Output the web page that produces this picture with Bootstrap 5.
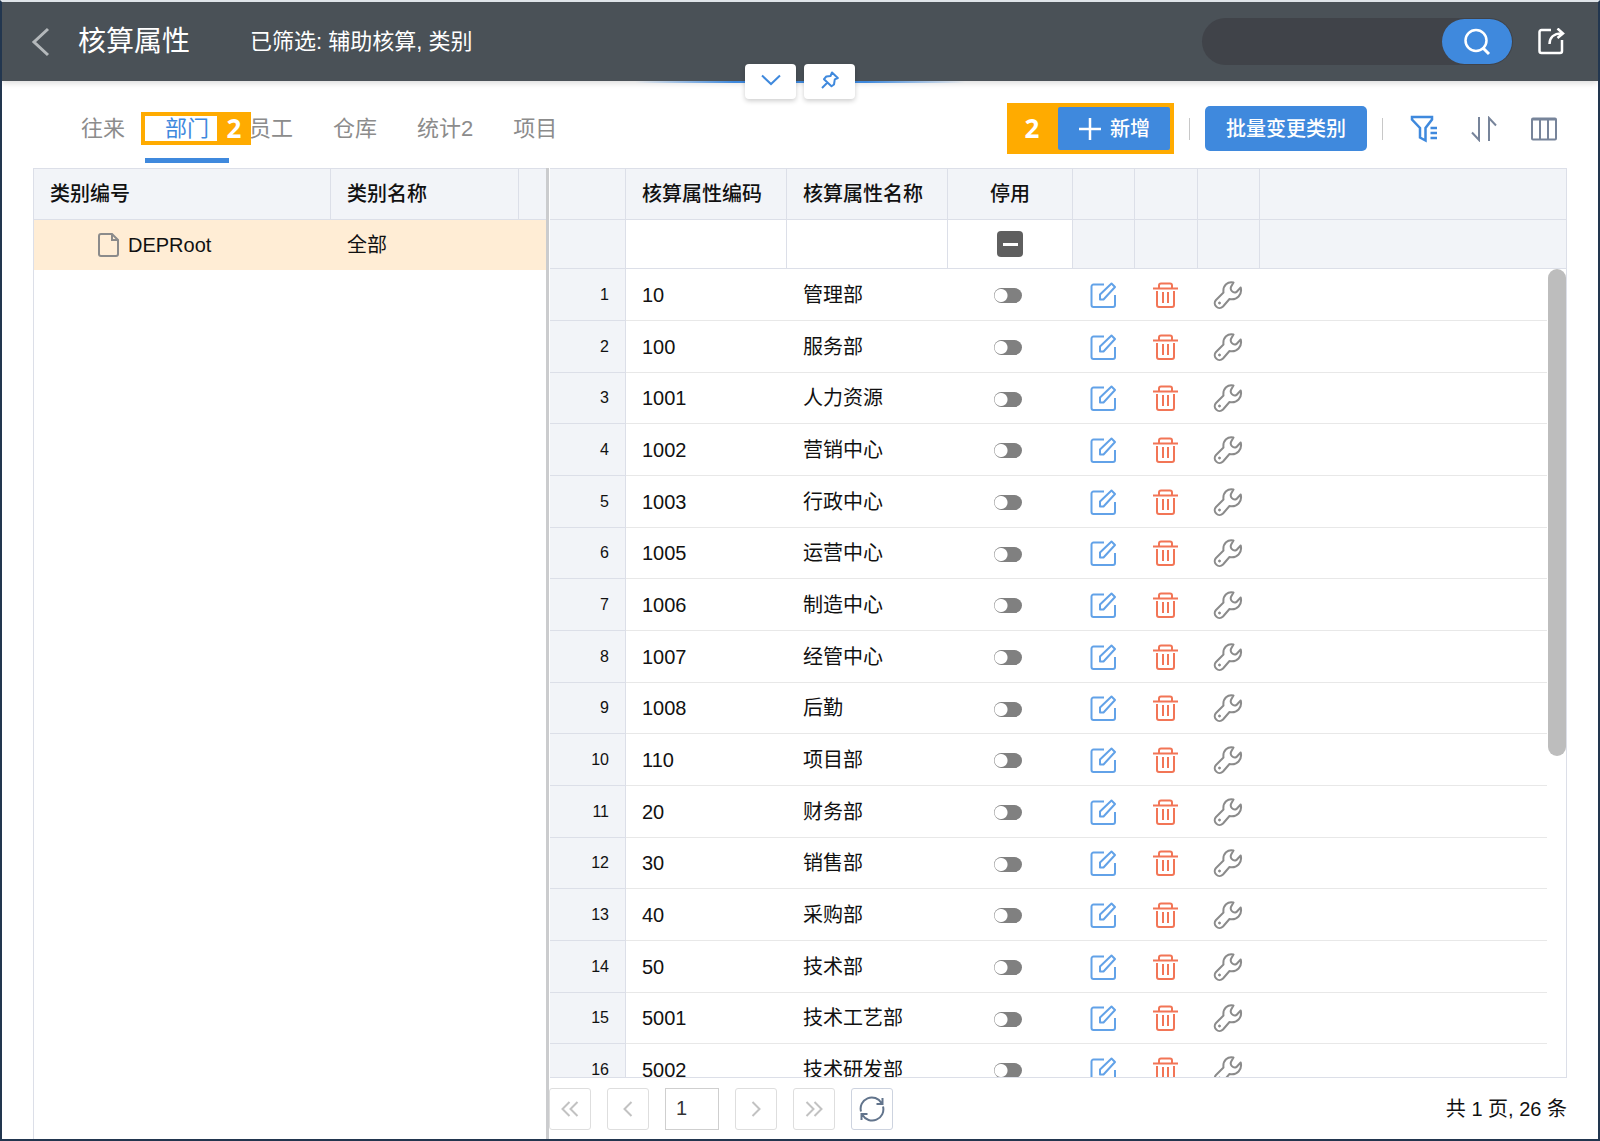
<!DOCTYPE html>
<html lang="zh-CN">
<head>
<meta charset="utf-8">
<meta name="viewport" content="width=device-width, initial-scale=1">
<title>核算属性</title>
<link href="https://cdn.jsdelivr.net/npm/bootstrap@5.3.0/dist/css/bootstrap.min.css" rel="stylesheet">
<style>
  :root { --line: #dcdfe8; --head: #f2f4f8; --blue: #3f89dd; --mark: #ffab00; }
  body { font-family: "Liberation Sans", "Noto Sans CJK SC", sans-serif; font-size: 20px; line-height: 30px; color: #111; background: #fff; }
  svg { fill: none; stroke: currentColor; stroke-width: 2; display: block; }
  .plain-btn { border: 0; background: none; padding: 0; display: flex; align-items: center; justify-content: center; color: inherit; }
  .app-frame { height: 100vh; border: 2px solid #22364f; border-top: 2px solid #dfe4e9; }
  .topbar { height: 79px; background: #4a5157; color: #fff; box-shadow: 0 2px 6px rgba(0,0,0,.15); padding: 0 33px 0 26px; }
  .topbar h1 { font-size: 28px; line-height: 40px; font-weight: 400; }
  .topbar .filtered { font-size: 22px; margin-left: 60px; }
  .back-btn { color: #b4b8bb; }
  .search-pill { width: 311px; height: 47px; background: #404349; border-radius: 24px; }
  .search-pill input { background: none; border: 0; outline: 0; color: #fff; min-width: 0; padding-left: 24px; }
  .search-pill button { width: 70px; height: 45px; border-radius: 23px; background: var(--blue); color: #fff; margin: 1px; }
  .glow { left: 50%; bottom: -2px; width: 330px; height: 2px; transform: translateX(-50%); background: linear-gradient(90deg, transparent, var(--blue) 30%, var(--blue) 70%, transparent); }
  .float-tabs { left: 50%; bottom: -18px; transform: translateX(-50%); gap: 8px; }
  .float-tabs button { width: 51px; height: 35px; background: #fff; color: var(--blue); border-radius: 4px; box-shadow: 0 2px 5px rgba(0,0,0,.2); padding: 0 0 4px; }
  .toolbar { height: 87px; padding: 22px 40px 5px 59px; }
  .tab-strip a { position: relative; height: 60px; padding: 0 20px; line-height: 52px; font-size: 22px; color: #8c8c8c; text-decoration: none; white-space: nowrap; }
  .tab-strip a.active { color: var(--blue); border-bottom: 5px solid var(--blue); }
  .mark-box { left: -4px; top: 9px; width: 110px; height: 33px; border: 4px solid var(--mark); border-right-width: 34px; z-index: 2; }
  .mark-num { font-family: "Noto Sans", sans-serif; font-weight: 700; font-size: 26px; color: #fff; text-align: center; }
  .mark-box .mark-num { position: absolute; left: 100%; top: -3px; width: 34px; line-height: 31px; }
  .mark-wrap { background: var(--mark); padding: 4px; height: 51px; }
  .mark-wrap .mark-num { width: 47px; line-height: 43px; padding-right: 5px; }
  .main-btn { background: var(--blue); color: #fff; font-size: 20px; border-radius: 5px; font-weight: 500; }
  .mark-wrap .main-btn { width: 112px; border-radius: 2px; gap: 8px; }
  .batch-btn { width: 162px; height: 45px; }
  .bar-sep { width: 1px; height: 22px; background: #c8c8c8; margin: 0 15px; }
  .icon-set { padding-left: 12px; }
  .panes { padding: 0 31px 0 31px; }
  .left-pane { width: 513px; border: 1px solid var(--line); border-width: 1px 0 0 1px; }
  .splitter { width: 3px; background: #cbccce; }
  .grid-table { table-layout: fixed; border-collapse: separate; border-spacing: 0; width: 100%; }
  .grid-table th { background: var(--head); border-right: 1px solid var(--line); border-bottom: 1px solid var(--line); height: 51px; padding: 0 16px; font-weight: 500; white-space: nowrap; }
  .grid-table th:last-child { border-right: 0; }
  .grid-table td { padding: 0 16px; white-space: nowrap; }
  .left-pane td { height: 50px; background: #ffedd5; }
  .left-pane td:first-child { padding-left: 64px; }
  .right-box { margin-left: 1px; border: 1px solid var(--line); border-left: 0; }
  .grid-table .filter-row th { height: 49px; }
  .grid-table .filter-row .open-cell { background: #fff; padding: 0; }
  .open-cell input[type=text] { width: 100%; height: 46px; border: 0; outline: 0; padding: 0 15px; display: block; }
  .tri-box { appearance: none; display: block; width: 26px; height: 26px; margin: 0 auto; border-radius: 4px; background: linear-gradient(#fff, #fff) center / 15px 3px no-repeat #5f5f5f; }
  .right-box tbody td { height: 52px; border-bottom: 1px solid #e8e8e8; }
  .right-box tbody tr:nth-child(3n) td { height: 51px; }
  .right-box tbody td.row-no { background: var(--head); border-right: 1px solid var(--line); border-bottom-color: var(--line); font-size: 16px; text-align: right; }
  .right-box tbody td.gutter { border-bottom: 0; }
  .right-box tbody td.tool { padding: 0 2px 0 0; }
  .right-box tbody td.switch-cell { padding: 2px 6px 0 0; }
  .tool .plain-btn { margin: 0 auto; }
  .off-switch { appearance: none; display: block; width: 28px; height: 15px; margin: 0 auto; border-radius: 8px; background: radial-gradient(circle at 7px 50%, #fff 6px, #808080 7px); }
  .ink-primary { color: var(--blue); }
  .ink-blue { color: #62a2e8; } .ink-red { color: #f27556; } .ink-gray { color: #8b8b8b; } .ink-slate { color: #77849a; }
  .scroll-thumb { top: 100px; right: 0; width: 18px; height: 487px; border-radius: 9px; background: #bdbdbd; }
  .pager { height: 61px; gap: 16px; }
  .pager button { width: 42px; height: 42px; border: 1px solid #dedede; border-radius: 3px; color: #c2c2c2; }
  .pager button.refresh { border-color: #cdd3df; color: #62748c; }
  .pager input { width: 54px; height: 42px; border: 1px solid #cfcfcf; padding: 0 10px; color: #333; }
</style>
<script src="https://cdn.jsdelivr.net/npm/bootstrap@5.3.0/dist/js/bootstrap.bundle.min.js"></script>
</head>
<body>
<svg class="d-none" aria-hidden="true">
  <symbol id="i-edit" viewBox="0 0 28 28"><path d="M15 3.500H4.500a2 2 0 0 0-2 2V24a2 2 0 0 0 2 2H24a2 2 0 0 0 2-2V14"/><path d="M11 18.500v-5L22.500 2.500 26 6 14.500 18.500z" stroke-linejoin="round"/></symbol>
  <symbol id="i-trash" viewBox="0 0 28 28"><path d="M1 7.500h25M7 7V4.500a2 2 0 0 1 2-2h9a2 2 0 0 1 2 2V7M5 10v14a2 2 0 0 0 2 2H20a2 2 0 0 0 2-2V10M11 11v11M16 11v11"/></symbol>
  <symbol id="i-wrench" viewBox="0 0 30 30"><path d="M20.500 2.500C15 1 9.500 5.500 10.500 12.500L3 20c-4 4.500 2.500 11 7 6.500l6.500-7.500c7.500 1.500 13-4.500 11.200-11.500L23.500 12C20 13.500 16.500 10 18.200 6.500z" stroke-linejoin="round"/><circle cx="6.500" cy="23" r="1" fill="currentColor" stroke-width="1"/></symbol>
</svg>

<div class="app-frame d-flex flex-column overflow-hidden">
  <header class="topbar position-relative d-flex align-items-center flex-shrink-0">
    <button class="plain-btn back-btn" aria-label="返回"><svg width="22" height="30" viewBox="0 0 22 30"><path d="M20 2 6 15l14 13" stroke-width="3"/></svg></button>
    <h1 class="mb-0 ms-4 ps-1">核算属性</h1>
    <span class="filtered">已筛选: 辅助核算, 类别</span>
    <div class="search-pill d-flex ms-auto">
      <input class="flex-grow-1" type="search" aria-label="搜索">
      <button class="plain-btn flex-shrink-0" aria-label="查询"><svg width="28" height="28" viewBox="0 0 28 28"><circle cx="13" cy="12.500" r="10.500" stroke-width="2.500"/><path d="m19.500 19.500 6.500 6.500" stroke-width="3"/></svg></button>
    </div>
    <button class="plain-btn ms-4" aria-label="分享"><svg width="28" height="28" viewBox="0 0 28 28"><path d="M14 2H4.500a2 2 0 0 0-2 2v19a2 2 0 0 0 2 2H23a2 2 0 0 0 2-2V12M12.500 16c0-6 4-10.500 12-10.500M20.500 .500l5.500 5L20.500 10" stroke-width="2.500"/></svg></button>
    <div class="glow position-absolute"></div>
    <div class="float-tabs position-absolute d-flex">
      <button class="plain-btn" aria-label="展开"><svg width="20" height="12" viewBox="0 0 20 12"><path d="m1 1.500 9 8.500 9-8.500"/></svg></button>
      <button class="plain-btn" aria-label="固定"><svg width="18" height="18" viewBox="0 0 18 18"><path d="M11 1.500 16.800 7l-3 1.300-.800 5.200-2.500 1.800L3 8.200l2.300-2.700L9.500 5zM6 12l-5 5" stroke-linejoin="round"/></svg></button>
    </div>
  </header>

  <div class="toolbar d-flex justify-content-between flex-shrink-0">
    <nav class="tab-strip d-flex">
      <a href="#">往来</a>
      <a href="#" class="active" aria-current="page">部门<span class="mark-box position-absolute"><span class="mark-num">2</span></span></a>
      <a href="#">员工</a>
      <a href="#">仓库</a>
      <a href="#">统计2</a>
      <a href="#">项目</a>
    </nav>
    <div class="d-flex align-items-center align-self-start">
      <div class="mark-wrap d-flex">
        <span class="mark-num">2</span>
        <button class="plain-btn main-btn"><svg width="24" height="24" viewBox="0 0 24 24"><path d="M12 1v22M1 12h22" stroke-width="2.500"/></svg>新增</button>
      </div>
      <span class="bar-sep"></span>
      <button class="plain-btn main-btn batch-btn">批量变更类别</button>
      <span class="bar-sep"></span>
      <div class="icon-set d-flex gap-4">
        <button class="plain-btn ink-primary me-2" aria-label="筛选"><svg width="28" height="28" viewBox="0 0 28 28"><path d="M2 2h20v2.500L15.500 13v12.500l-5.500-3V13L2 4.500z" stroke-width="2.500"/><path d="M20.500 13H27M20.500 18H27M20.500 23H27" stroke-width="2.500"/></svg></button>
        <button class="plain-btn ink-slate me-2" aria-label="排序"><svg width="28" height="26" viewBox="0 0 28 26"><path d="M9 1v23L2 16.500M19 25V2l7 7.500"/></svg></button>
        <button class="plain-btn ink-slate" aria-label="列设置"><svg width="28" height="26" viewBox="0 0 28 26"><rect x="2" y="2.500" width="24" height="21" rx="1"/><path d="M2 3.500h24M10 3v20M18 3v20"/></svg></button>
      </div>
    </div>
  </div>

  <main class="panes d-flex flex-grow-1 overflow-hidden">
    <section class="left-pane flex-shrink-0">
      <table class="grid-table">
        <colgroup><col style="width:297px"><col style="width:188px"><col></colgroup>
        <thead><tr><th>类别编号</th><th>类别名称</th><th></th></tr></thead>
        <tbody><tr>
          <td><span class="d-flex align-items-center gap-2"><svg class="ink-gray" width="22" height="24" viewBox="0 0 22 24"><path d="M3 1h11l6 6v14a2 2 0 0 1-2 2H3a2 2 0 0 1-2-2V3a2 2 0 0 1 2-2zM14 1v6h6"/></svg><span>DEPRoot</span></span></td>
          <td>全部</td><td></td>
        </tr></tbody>
      </table>
    </section>
    <div class="splitter flex-shrink-0"></div>
    <section class="d-flex flex-column flex-grow-1 overflow-hidden">
      <div class="right-box position-relative flex-grow-1 overflow-hidden">
        <table class="grid-table">
          <colgroup><col style="width:76px"><col style="width:161px"><col style="width:161px"><col style="width:125px"><col style="width:62px"><col style="width:63px"><col style="width:62px"><col><col style="width:19px"></colgroup>
          <thead>
            <tr><th></th><th>核算属性编码</th><th>核算属性名称</th><th class="text-center">停用</th><th></th><th></th><th></th><th colspan="2"></th></tr>
            <tr class="filter-row"><th></th>
              <th class="open-cell"><input type="text" aria-label="编码筛选"></th>
              <th class="open-cell"><input type="text" aria-label="名称筛选"></th>
              <th class="open-cell"><input type="checkbox" class="tri-box" aria-label="停用筛选"></th>
              <th></th><th></th><th></th><th colspan="2"></th></tr>
          </thead>
          <tbody id="rows"></tbody>
        </table>
        <div class="scroll-thumb position-absolute"></div>
      </div>
      <footer class="pager d-flex align-items-center flex-shrink-0">
        <button class="plain-btn" aria-label="首页"><svg width="18" height="16" viewBox="0 0 18 16"><path d="M8.500 1 1.500 8l7 7M16.500 1l-7 7 7 7"/></svg></button>
        <button class="plain-btn" aria-label="上一页"><svg width="10" height="16" viewBox="0 0 10 16"><path d="M8.500 1 1.500 8l7 7"/></svg></button>
        <input type="text" value="1" aria-label="页码">
        <button class="plain-btn" aria-label="下一页"><svg width="10" height="16" viewBox="0 0 10 16"><path d="m1.500 1 7 7-7 7"/></svg></button>
        <button class="plain-btn" aria-label="末页"><svg width="18" height="16" viewBox="0 0 18 16"><path d="m1.500 1 7 7-7 7M9.500 1l7 7-7 7"/></svg></button>
        <button class="plain-btn refresh" aria-label="刷新"><svg width="26" height="26" viewBox="0 0 26 26"><path d="M2 15.500A11.200 11.200 0 0 1 22.500 7M24 10.500A11.200 11.200 0 0 1 3.500 19M23.500 2v6h-6M2.500 24v-6h6"/></svg></button>
        <span class="ms-auto">共 1 页, 26 条</span>
      </footer>
    </section>
  </main>
</div>

<script>
  const departments = [
    ['10', '管理部'], ['100', '服务部'], ['1001', '人力资源'], ['1002', '营销中心'],
    ['1003', '行政中心'], ['1005', '运营中心'], ['1006', '制造中心'], ['1007', '经管中心'],
    ['1008', '后勤'], ['110', '项目部'], ['20', '财务部'], ['30', '销售部'],
    ['40', '采购部'], ['50', '技术部'], ['5001', '技术工艺部'], ['5002', '技术研发部']
  ];
  const action = (icon, ink, label, size) =>
    `<td class="tool"><button class="plain-btn ${ink}" aria-label="${label}"><svg width="${size}" height="${size}"><use href="#${icon}"/></svg></button></td>`;
  document.getElementById('rows').innerHTML = departments.map(([code, name], i) => `
    <tr><td class="row-no">${i + 1}</td><td>${code}</td><td>${name}</td>
    <td class="switch-cell"><input type="checkbox" role="switch" class="off-switch" aria-label="停用 ${name}"></td>
    ${action('i-edit', 'ink-blue', '编辑', 28)}${action('i-trash', 'ink-red', '删除', 28)}${action('i-wrench', 'ink-gray', '设置', 30)}
    <td></td><td class="gutter"></td></tr>`).join('');
</script>
</body>
</html>
